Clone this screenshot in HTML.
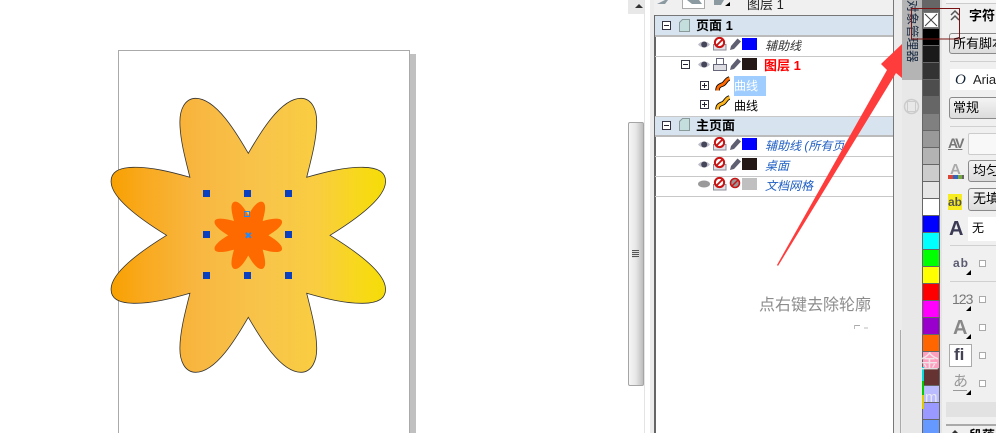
<!DOCTYPE html>
<html><head><meta charset="utf-8">
<style>
html,body{margin:0;padding:0;background:#fff}
#r{position:relative;width:996px;height:433px;overflow:hidden;background:#fff;font-family:"Liberation Sans","WenQuanYi Zen Hei","Noto Sans CJK SC",sans-serif;font-size:12px;color:#000}
#r div{position:absolute;box-sizing:border-box}
.t{white-space:nowrap;line-height:20px;height:20px}
.hd{left:655px;width:238px;background:#d7e4f0}
.ln{left:655px;width:238px;height:1px;background:#c8c8c8}
.i{font-style:italic;color:#1f5fc4}
.sw{width:15px;height:12px;left:742px}
.pal{left:923px;width:16px;height:16px}
.sel{background:linear-gradient(#f4f4f4,#dcdcdc);border:1px solid #8a8a8a;border-radius:3px;white-space:nowrap;padding-left:3px;line-height:19px;font-size:13px}
.cb{left:979px;width:7px;height:7px;border:1px solid #aaa;background:#fff}
.g{color:#5a5a70;font-weight:bold;white-space:nowrap}
svg{position:absolute;overflow:visible}
</style></head><body><div id="r">

<!-- page -->
<div style="left:410px;top:54px;width:6px;height:379px;background:#c0c0c0"></div>
<div style="left:118px;top:50px;width:292px;height:390px;border:1px solid #aaa;background:#fff"></div>

<svg style="left:0;top:0" width="996" height="433">
<defs>
<linearGradient id="gr" gradientUnits="userSpaceOnUse" x1="111" y1="0" x2="386" y2="0">
<stop offset="0" stop-color="#f8a000"/><stop offset=".1" stop-color="#f9a81a"/><stop offset=".3" stop-color="#f8b640"/><stop offset=".55" stop-color="#f8c44a"/><stop offset=".75" stop-color="#f9cd40"/><stop offset=".93" stop-color="#f7da14"/><stop offset="1" stop-color="#f6dc08"/>
</linearGradient>
<path id="fl" d="M248.3 153.3C259 135 280 98.300 301 98.300C312 98.500 317 110 316.700 123C316.500 140 311 160 306.700 177.300C325 172 345 167 363 167.300C378 167.500 386 172 385.500 182C385 200 350 223 330 235.300C350 247.600 385 270.600 385.500 288.600C386 298.600 378 303.100 363 303.300C345 303.600 325 298.600 306.700 293.300C311 310.600 316.500 330.600 316.700 347.600C317 360.600 312 372.100 301 372.300C280 372.300 259 335.600 248.300 317.300C237.600 335.600 216.600 372.300 195.600 372.300C184.600 372.100 179.600 360.600 179.900 347.600C180.100 330.600 185.600 310.600 189.900 293.300C171.600 298.600 151.600 303.600 133.600 303.300C118.600 303.100 110.600 298.600 111.100 288.600C111.600 270.600 146.600 247.600 166.600 235.300C146.600 223 111.600 200 111.100 182C110.600 172 118.600 167.500 133.600 167.300C151.600 167 171.600 172 189.900 177.300C185.600 160 180.100 140 179.900 123C179.600 110 184.600 98.500 195.600 98.300C216.600 98.300 237.600 135 248.300 153.300Z"/>
</defs>
<use href="#fl" fill="url(#gr)" stroke="#333" stroke-width=".8"/>
<use href="#fl" fill="#ff6a00" transform="translate(248.3 235.3) scale(.246) translate(-248.3 -235.3)"/>
<g fill="#0a3fbf">
<rect x="203" y="190" width="7" height="7"/><rect x="244" y="190" width="7" height="7"/><rect x="285" y="190" width="7" height="7"/>
<rect x="203" y="231" width="7" height="7"/><rect x="285" y="231" width="7" height="7"/>
<rect x="203" y="272" width="7" height="7"/><rect x="244" y="272" width="7" height="7"/><rect x="285" y="272" width="7" height="7"/>
</g>
<rect x="244.500" y="211.500" width="5" height="5" fill="none" stroke="#1a8cff" stroke-width="1"/>
<path d="M245.800 232.800l5 5M250.800 232.800l-5 5" stroke="#1a8cff" stroke-width="2" fill="none"/>
</svg>

<!-- left scroll strip -->
<div style="left:628px;top:0;width:16px;height:14px;background:#e8e8e8"></div>
<div style="left:635px;top:4px;width:0;height:0;border:4px solid transparent;border-top:0;border-bottom:4px solid #333"></div>
<div style="left:628px;top:122px;width:16px;height:264px;background:linear-gradient(90deg,#f6f6f6,#e6e6e6 50%,#bdbdbd);border:1px solid #a5a5a5;border-radius:2px"></div>
<div style="left:632px;top:250px;width:7px;height:8px;background:repeating-linear-gradient(#555 0 1px,#ddd 1px 2px)"></div>
<div style="left:644px;top:0;width:1px;height:433px;background:#e4e4e4"></div>
<div style="left:645px;top:0;width:5px;height:433px;background:#fff"></div>
<div style="left:650px;top:0;width:4px;height:433px;background:#ececec"></div>
<div style="left:654px;top:0;width:240px;height:15px;background:#f0f0f0"></div>

<!-- tool row -->
<div style="left:682px;top:-4px;width:23px;height:13px;background:#fff;border:1px solid #aaa"></div>
<svg style="left:0;top:0" width="760" height="12"><path d="M657 4l8-4h3l-3 4zM687 0h12l3 4h-10zM714 0h10l-3 5h-7z" fill="#8a9aa0"/><path d="M725 6h5v-4z" fill="#000"/></svg>
<div class="t" style="left:747px;top:-5px;font-size:13px;color:#222">图层 1</div>

<!-- docker panel -->
<div style="left:654px;top:15px;width:240px;height:418px;background:#fff;border-left:2px solid #666;border-top:1px solid #777"></div>
<div class="hd" style="top:16px;height:19px"></div>
<div style="left:655px;top:35px;width:238px;height:2px;background:#bbb"></div>
<div class="ln" style="top:56px"></div>
<div class="ln" style="top:116px"></div>
<div class="hd" style="top:117px;height:19px"></div>
<div style="left:655px;top:135px;width:238px;height:2px;background:#bbb"></div>
<div class="ln" style="top:156px"></div>
<div class="ln" style="top:176px"></div>
<div class="ln" style="top:196px"></div>

<div style="left:734px;top:76px;width:32px;height:20px;background:#9fcdff"></div>

<svg style="left:0;top:0" width="900" height="210">
<defs>
<g id="minus"><rect x=".5" y=".5" width="8" height="8" fill="#fff" stroke="#334"/><path d="M2 4.500h5" stroke="#223"/></g>
<g id="plus"><rect x=".5" y=".5" width="8" height="8" fill="#fff" stroke="#334"/><path d="M2 4.500h5M4.500 2v5" stroke="#223"/></g>
<g id="pg"><path d="M.5 12.500v-9l3-3h7v12z" fill="#c4dedd" stroke="#8a9a9a"/></g>
<g id="eye"><path d="M0 4.500C3 .5 9 .5 12 4.500C9 8.500 3 8.500 0 4.500Z" fill="#bdbdc9"/><circle cx="6.200" cy="4.500" r="3" fill="#46465a"/></g>
<g id="no"><path d="M.5 7.500h12.500v5.500H.5z" fill="#e2e2e8" stroke="#8c8c98"/><circle cx="6.500" cy="5.500" r="4.600" fill="#fff" stroke="#c81414" stroke-width="2"/><path d="M3.300 8.700l6.400-6.400" stroke="#c81414" stroke-width="1.800"/></g>
<g id="pen"><path d="M0 12l1-4 6.500-7.500 3.500 3-7 7.500z" fill="#5f5f72"/></g>
</defs>
<use href="#minus" x="662" y="21"/><use href="#pg" x="679" y="19"/>
<use href="#minus" x="681" y="60"/>
<use href="#plus" x="700" y="81"/><use href="#plus" x="700" y="100"/>
<use href="#minus" x="662" y="121"/><use href="#pg" x="679" y="118"/>
<use href="#eye" x="698" y="40"/><use href="#no" x="713" y="37"/><use href="#pen" x="730" y="38"/>
<use href="#eye" x="698" y="60"/>
<path d="M713.500 64.500h13v6h-13z" fill="#dcdce2" stroke="#66667a"/><rect x="716.500" y="58.500" width="7" height="6" fill="#fff" stroke="#66667a"/>
<use href="#pen" x="730" y="58"/>
<use href="#eye" x="698" y="140"/><use href="#no" x="713" y="137"/><use href="#pen" x="730" y="138"/>
<use href="#eye" x="698" y="160"/><use href="#no" x="713" y="157"/><use href="#pen" x="730" y="158"/>
<ellipse cx="704" cy="184" rx="6" ry="3.500" fill="#9a9a9a"/><use href="#no" x="713" y="177"/>
<circle cx="735" cy="183" r="4.500" fill="#999" stroke="#c81414" stroke-width="1.600"/><path d="M732 186l6-6" stroke="#c81414" stroke-width="1.500"/>
<path d="M717.500 90.500c0-4 2-5 5-6s3-5 7-6" fill="none" stroke="#000" stroke-width="4.500"/><path d="M717.500 90.500c0-4 2-5 5-6s3-5 7-6" fill="none" stroke="#ff6a00" stroke-width="2.800"/>
<path d="M717.500 109.500c0-4 2-5 5-6s3-5 7-6" fill="none" stroke="#000" stroke-width="4.500"/><path d="M717.500 109.500c0-4 2-5 5-6s3-5 7-6" fill="none" stroke="#fbb41c" stroke-width="2.800"/>
</svg>

<div class="sw" style="top:38px;background:#00f"></div>
<div class="sw" style="top:58px;background:#231815"></div>
<div class="sw" style="top:138px;background:#00f"></div>
<div class="sw" style="top:158px;background:#231815"></div>
<div class="sw" style="top:178px;background:#c0c0c0"></div>

<div class="t" style="left:696px;top:16px;font-weight:bold;font-size:13px">页面 1</div>
<div class="t" style="left:696px;top:116px;font-weight:bold;font-size:13px">主页面</div>
<div class="t" style="left:765px;top:36px;font-style:italic;color:#333">辅助线</div>
<div class="t" style="left:764px;top:56px;color:#f00;font-weight:bold;font-size:13px">图层 1</div>
<div class="t" style="left:734px;top:76px;color:#fff">曲线</div>
<div class="t" style="left:734px;top:96px">曲线</div>
<div class="t i" style="left:765px;top:136px;width:80px;overflow:hidden">辅助线 (所有页</div>
<div class="t i" style="left:765px;top:156px">桌面</div>
<div class="t i" style="left:765px;top:176px">文档网格</div>

<!-- text annotation -->
<div class="t" style="left:759px;top:296px;font-size:16px;color:#8c8c8c">点右键去除轮廓</div>
<div style="left:854px;top:325px;width:6px;height:1px;background:#aaa"></div>
<div style="left:854px;top:325px;width:1px;height:4px;background:#bbb"></div>
<div style="left:864px;top:327px;width:4px;height:2px;background:#ddd"></div>

<!-- vertical tab strip -->
<div style="left:893px;top:0;width:9px;height:433px;background:#ececec;border-left:1px solid #777"></div>
<div style="left:902px;top:0;width:20px;height:80px;background:#b4b4b4"></div>
<div style="left:902px;top:80px;width:20px;height:353px;background:#e8e8e8"></div>
<div style="left:900px;top:330px;width:1px;height:103px;background:#aaa"></div>
<div style="left:905px;top:0;width:14px;line-height:14px;font-size:12.500px;color:#1c2c44;writing-mode:vertical-rl;text-orientation:sideways;white-space:nowrap">对象管理器</div>
<svg style="left:0;top:0" width="930" height="120"><circle cx="911.500" cy="106.500" r="7" fill="none" stroke="#ccc" stroke-width="1.500"/><rect x="907.500" y="101.500" width="8" height="10" fill="none" stroke="#ccc"/></svg>

<!-- palette -->
<div style="left:922px;top:0;width:18px;height:433px;background:#666"></div>
<div style="left:923px;top:12px;width:16px;height:16px;background:#fff;border:1px solid #777"></div>
<svg style="left:923px;top:12px" width="16" height="16"><path d="M2 2l12 12M14 2L2 14" stroke="#444" fill="none"/></svg>
<div class="pal" style="top:29px;background:#000"></div>
<div class="pal" style="top:46px;background:#1a1a1a"></div>
<div class="pal" style="top:63px;background:#333"></div>
<div class="pal" style="top:80px;background:#4d4d4d"></div>
<div class="pal" style="top:97px;background:#666"></div>
<div class="pal" style="top:114px;background:#808080"></div>
<div class="pal" style="top:131px;background:#999"></div>
<div class="pal" style="top:148px;background:#b3b3b3"></div>
<div class="pal" style="top:165px;background:#ccc"></div>
<div class="pal" style="top:182px;background:#e6e6e6"></div>
<div class="pal" style="top:199px;background:#fff"></div>
<div class="pal" style="top:216px;background:#00f"></div>
<div class="pal" style="top:233px;background:#0ff"></div>
<div class="pal" style="top:250px;background:#0f0"></div>
<div class="pal" style="top:267px;background:#ff0"></div>
<div class="pal" style="top:284px;background:#f00"></div>
<div class="pal" style="top:301px;background:#f0f"></div>
<div class="pal" style="top:318px;background:#90c"></div>
<div class="pal" style="top:335px;background:#f60"></div>
<div class="pal" style="top:352px;background:#ff9fc0"></div>
<div class="pal" style="top:369px;background:#663333"></div>
<div class="pal" style="top:386px;background:#bbf"></div>
<div class="pal" style="top:403px;background:#99f"></div>
<div class="pal" style="top:420px;background:#69f"></div>
<div style="left:922px;top:367px;width:2px;height:14px;background:#0dd"></div>
<div style="left:922px;top:381px;width:2px;height:14px;background:#0c0"></div>
<div style="left:922px;top:395px;width:2px;height:14px;background:#dc0"></div>
<div class="t" style="left:920px;top:351px;font-size:19px;line-height:24px;height:24px;color:#eee;opacity:.9">金</div>
<div class="t" style="left:925px;top:388px;font-size:15px;color:#eee;opacity:.9">m</div>

<!-- property panel -->
<div style="left:940px;top:0;width:56px;height:433px;background:#f0f0f0;border-left:2px solid #e4e4e4"></div>
<div style="left:946px;top:0;width:50px;height:4px;background:#f6f6f6;border-bottom:1px solid #ccc"></div>
<svg style="left:950px;top:10px" width="10" height="12"><path d="M1 5l4-4 4 4M1 10l4-4 4 4" fill="none" stroke="#555" stroke-width="1.500"/></svg>
<div class="t" style="left:969px;top:6px;font-size:13px;font-weight:bold">字符</div>
<div class="sel" style="left:949px;top:33px;width:60px;height:21px">所有脚本</div>
<div style="left:950px;top:61px;width:46px;height:1px;background:#d0d0d0"></div>
<div style="left:950px;top:69px;width:50px;height:21px;background:#fff"></div>
<div class="t" style="left:955px;top:70px;font-family:'Liberation Serif',serif;font-style:italic;font-size:15px;color:#123">O</div>
<div class="t" style="left:973px;top:70px;font-size:13px;color:#222">Arial</div>
<div class="sel" style="left:949px;top:97px;width:60px;height:22px">常规</div>
<div style="left:950px;top:126px;width:46px;height:1px;background:#d0d0d0"></div>

<div class="t g" style="left:948px;top:133px;font-size:14px;letter-spacing:-2px;color:#777;font-weight:bold;text-decoration:underline">AV</div>
<div style="left:968px;top:133px;width:40px;height:22px;background:#f8f8f8;border:1px solid #ccc;border-radius:2px"></div>

<div class="t" style="left:950px;top:160px;font-size:15px;font-weight:bold;color:#aaa">A</div>
<div style="left:948px;top:175px;width:5px;height:4px;background:#d43"></div>
<div style="left:953px;top:175px;width:5px;height:4px;background:#36b"></div>
<div style="left:958px;top:175px;width:4px;height:4px;background:#7a4"></div>
<div style="left:962px;top:175px;width:2px;height:4px;background:#666"></div>
<div class="sel" style="left:968px;top:160px;width:40px;height:22px;padding-left:4px">均匀</div>

<div style="left:948px;top:194px;width:14px;height:16px;background:#f6ec20"></div>
<div class="t" style="left:948px;top:192px;font-size:12px;font-weight:bold;color:#555">ab</div>
<div class="sel" style="left:968px;top:188px;width:40px;height:23px;padding-left:4px">无填</div>

<div class="t" style="left:949px;top:217px;font-size:20px;font-weight:bold;color:#3a3a55;line-height:24px;height:24px">A</div>
<div style="left:968px;top:217px;width:40px;height:24px;background:#fff"></div>
<div class="t" style="left:972px;top:218px">无</div>
<div style="left:950px;top:245px;width:46px;height:1px;background:#d0d0d0"></div>

<div class="t g" style="left:953px;top:253px;font-size:12px;letter-spacing:1px">ab</div>
<div style="left:966px;top:270px;width:0;height:0;border-left:5px solid transparent;border-bottom:5px solid #000"></div>
<div class="cb" style="top:260px"></div>
<div style="left:950px;top:281px;width:46px;height:1px;background:#d0d0d0"></div>

<div class="t" style="left:952px;top:289px;font-size:14px;letter-spacing:-1px;color:#777">123</div>
<div style="left:966px;top:306px;width:0;height:0;border-left:5px solid transparent;border-bottom:5px solid #000"></div>
<div class="cb" style="top:296px"></div>

<div class="t" style="left:953px;top:316px;font-size:20px;font-weight:bold;color:#888;line-height:24px;height:24px">A</div>
<div style="left:966px;top:334px;width:0;height:0;border-left:5px solid transparent;border-bottom:5px solid #000"></div>
<div class="cb" style="top:324px"></div>

<div style="left:949px;top:344px;width:23px;height:23px;background:#fff;border:1px solid #aaa"></div>
<div class="t" style="left:954px;top:345px;font-size:17px;font-weight:bold;color:#445">fi</div>
<div class="cb" style="top:352px"></div>

<div class="t" style="left:953px;top:372px;font-size:15px;color:#999">あ</div>
<div style="left:953px;top:390px;width:14px;height:1px;background:#999"></div>
<div style="left:966px;top:390px;width:0;height:0;border-left:5px solid transparent;border-bottom:5px solid #000"></div>
<div class="cb" style="top:380px"></div>

<div style="left:946px;top:402px;width:50px;height:15px;background:#e2e2e2"></div>
<div style="left:946px;top:424px;width:50px;height:2px;background:#aaa"></div>
<div class="t" style="left:969px;top:426px;font-size:13px;font-weight:bold">段落</div>
<div style="left:951px;top:430px;width:0;height:0;border:4px solid transparent;border-top:0;border-bottom:4px solid #333"></div>

<!-- red annotation box and arrow -->
<svg style="left:0;top:0" width="996" height="433">
<rect x="911.500" y="8.500" width="48" height="30.500" fill="none" stroke="#7a1414" stroke-width="1"/>
<path d="M777 265L887 70 881 64 902 44 902 78 896 73 778 266Z" fill="#ff3c3c"/>
</svg>
</div></body></html>
